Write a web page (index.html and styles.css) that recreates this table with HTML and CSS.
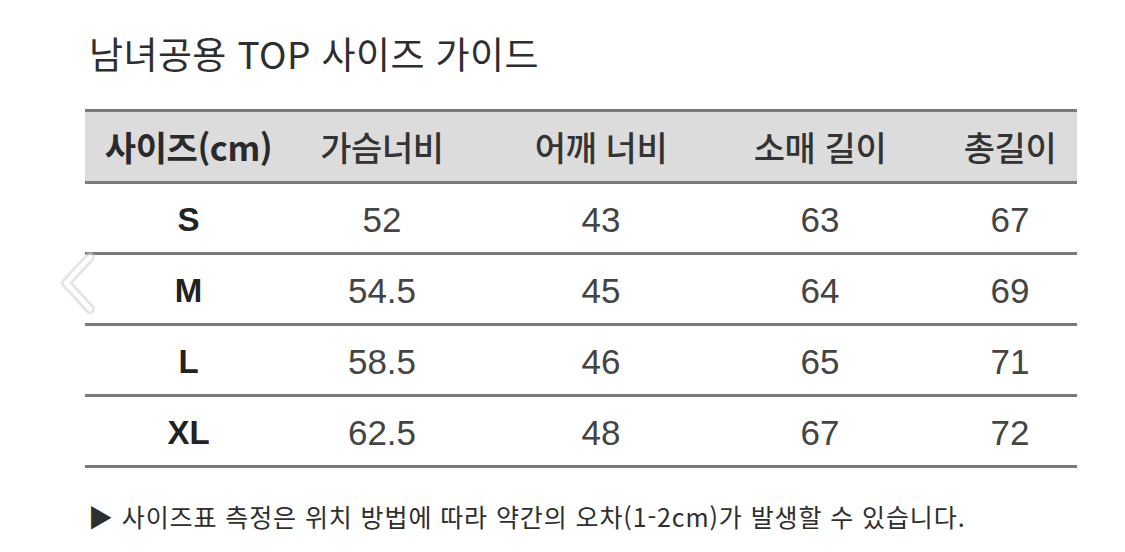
FILE: index.html
```html
<!DOCTYPE html>
<html lang="ko">
<head>
<meta charset="utf-8">
<link rel="stylesheet" href="styles.css">
</head>
<body>
<div class="page">
  <h1 class="title">남녀공용 TOP 사이즈 가이드</h1>
  <div class="table">
    <div class="row head">
      <div class="cell c1">사이즈(cm)</div>
      <div class="cell c2">가슴너비</div>
      <div class="cell c3">어깨 너비</div>
      <div class="cell c4">소매 길이</div>
      <div class="cell c5">총길이</div>
    </div>
    <div class="row">
      <div class="cell c1 size">S</div>
      <div class="cell c2">52</div>
      <div class="cell c3">43</div>
      <div class="cell c4">63</div>
      <div class="cell c5">67</div>
    </div>
    <div class="row">
      <div class="cell c1 size">M</div>
      <div class="cell c2">54.5</div>
      <div class="cell c3">45</div>
      <div class="cell c4">64</div>
      <div class="cell c5">69</div>
    </div>
    <div class="row">
      <div class="cell c1 size">L</div>
      <div class="cell c2">58.5</div>
      <div class="cell c3">46</div>
      <div class="cell c4">65</div>
      <div class="cell c5">71</div>
    </div>
    <div class="row">
      <div class="cell c1 size">XL</div>
      <div class="cell c2">62.5</div>
      <div class="cell c3">48</div>
      <div class="cell c4">67</div>
      <div class="cell c5">72</div>
    </div>
  </div>
  <p class="note">▶ 사이즈표 측정은 위치 방법에 따라 약간의 오차(1-2cm)가 발생할 수 있습니다.</p>
  <div class="prev">
    <svg width="44" height="66" viewBox="0 0 44 66">
      <path d="M34 7 L10 33 L34 59" fill="none" stroke="#cfcfcf" stroke-width="10" stroke-linecap="round" stroke-linejoin="round" opacity="0.55"/>
      <path d="M34 7 L10 33 L34 59" fill="none" stroke="#ffffff" stroke-width="4.5" stroke-linecap="round" stroke-linejoin="round"/>
    </svg>
  </div>
</div>
</body>
</html>
```

FILE: styles.css
```css
html, body {
  margin: 0;
  padding: 0;
  background: #ffffff;
}
body {
  font-family: "Liberation Sans", "Noto Sans CJK KR", sans-serif;
  color: #333;
}
.page {
  position: relative;
  width: 1125px;
  height: 552px;
  padding: 28px 48px 0 85px;
  box-sizing: border-box;
}
.title {
  margin: 0 0 0 4px;
  font-family: "Noto Sans CJK KR", sans-serif;
  font-weight: 400;
  font-size: 37px;
  line-height: 50px;
  color: #2e2e2e;
  letter-spacing: 0.4px;
}
.table {
  margin-top: 31px;
  width: 992px;
  border-top: 3px solid #7a7a7a;
}
.row {
  display: grid;
  grid-template-columns: 207px 180px 258px 180px 167px;
  height: 68px;
  border-bottom: 3px solid #7a7a7a;
  align-items: center;
}
.row.head {
  background: #dcdcdc;
  height: 69px;
}
.cell {
  text-align: center;
  font-size: 35px;
  color: #444;
  padding-top: 4px;
}
.cell.c5 {
  padding-left: 33px;
}
.head .cell {
  font-family: "Noto Sans CJK KR", sans-serif;
  font-weight: 500;
  font-size: 34px;
  color: #333;
  letter-spacing: -0.4px;
  padding-top: 0;
}
.head .c1 {
  font-weight: 700;
  color: #2a2a2a;
}
.cell.size {
  font-weight: 700;
  font-size: 33px;
  color: #222;
}
.note {
  margin: 30px 0 0 3px;
  font-family: "Noto Sans CJK KR", sans-serif;
  font-size: 25px;
  color: #2e2e2e;
  letter-spacing: 0.9px;
}
.prev {
  position: absolute;
  left: 56px;
  top: 250px;
  width: 44px;
  height: 66px;
}
```
